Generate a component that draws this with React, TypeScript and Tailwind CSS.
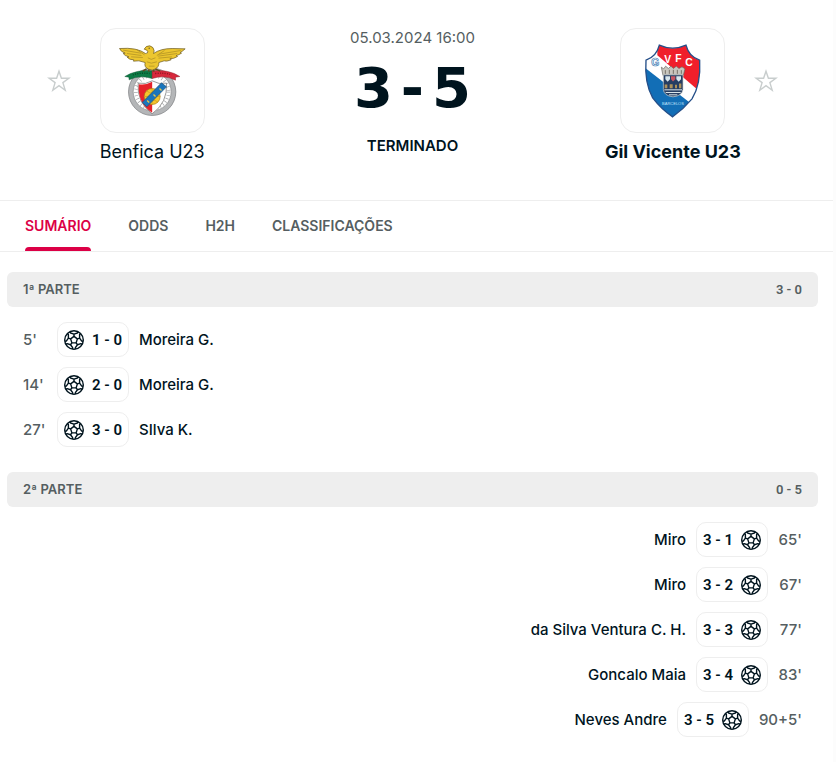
import { useState } from 'react'

type Goal = { minute: string; score: string; player: string }

const tabs = ['SUMÁRIO', 'ODDS', 'H2H', 'CLASSIFICAÇÕES']

const firstHalf: Goal[] = [
  { minute: "5'", score: '1 - 0', player: 'Moreira G.' },
  { minute: "14'", score: '2 - 0', player: 'Moreira G.' },
  { minute: "27'", score: '3 - 0', player: 'SIlva K.' },
]

const secondHalf: Goal[] = [
  { minute: "65'", score: '3 - 1', player: 'Miro' },
  { minute: "67'", score: '3 - 2', player: 'Miro' },
  { minute: "77'", score: '3 - 3', player: 'da Silva Ventura C. H.' },
  { minute: "83'", score: '3 - 4', player: 'Goncalo Maia' },
  { minute: "90+5'", score: '3 - 5', player: 'Neves Andre' },
]

const angles = [0, 72, 144, 216, 288]

function Ball() {
  return (
    <svg viewBox="0 0 20 20" className="size-5 shrink-0" fill="none" stroke="#00141e" strokeWidth="1.4" strokeLinejoin="round">
      <circle cx="10" cy="10" r="9.3" />
      <path d="M10 6.4 13.4 8.9 12.1 12.9H7.9L6.6 8.9Z" />
      {angles.map((a) => (
        <g key={a} transform={`rotate(${a} 10 10)`}>
          <path d="M10 6.4V4.1L6.6 3 6 1.7M10 4.1 13.4 3 14 1.7" />
        </g>
      ))}
    </svg>
  )
}

function FavoriteButton({ team }: { team: string }) {
  return (
    <button type="button" aria-label={team} className="cursor-pointer">
      <svg viewBox="0 0 24 24" className="size-6" fill="none" stroke="#c8cdcd" strokeWidth="1.4">
        <path d="M12 2.2 14.4 9.2H21.9L15.9 13.6 18.2 21.2 12 16.7 5.8 21.2 8.1 13.6 2.1 9.2H9.6Z" />
      </svg>
    </button>
  )
}

function BenficaLogo() {
  return (
    <svg viewBox="67.5 61.5 240 240" className="size-20">
      <circle cx="188" cy="214" r="71" fill="#b4b6b8" stroke="#77797b" strokeWidth="2" />
      <circle cx="188" cy="214" r="57" fill="#fff" stroke="#88898b" strokeWidth="2" />
      <circle cx="188" cy="214" r="49" fill="none" stroke="#a3a5a7" strokeWidth="11" strokeDasharray="2 8" />
      <path d="M146 188Q168 193 188 181 208 193 231 188 235 246 188 280 141 246 146 188Z" fill="#fff" stroke="#666" strokeWidth="2" />
      <path d="M148 191Q168 195 188 184V277Q143 247 148 191Z" fill="#e5232b" />
      <circle cx="188" cy="228" r="24" fill="#f5c62c" stroke="#a87a16" strokeWidth="2" />
      <path d="M188 204V252M164 228H212M171 211Q188 225 205 211M171 245Q188 231 205 245" fill="none" stroke="#c79a22" strokeWidth="2" />
      <path d="M158 246 216 187 231 199 172 259Z" fill="#1b75bb" stroke="#234e74" strokeWidth="2" />
      <path d="M173 240l6 6M192 222l6 6M210 204l6 6" stroke="#e9c748" strokeWidth="4" />
      <path d="M106 168Q142 146 190 151L188 174Q151 162 119 178L118 170Z" fill="#0b7b45" stroke="#185b3a" strokeWidth="1.5" />
      <path d="M188 151Q237 146 271 168L258 170 258 179Q225 162 188 174Z" fill="#d8283c" stroke="#8b2630" strokeWidth="1.5" />
      <path d="M130 163Q153 156 180 159" stroke="#064a29" strokeWidth="4" strokeDasharray="3 4" fill="none" />
      <path d="M197 159Q227 156 246 163" stroke="#8b1522" strokeWidth="4" strokeDasharray="3 4" fill="none" />
      <path d="M171 145 160 152M197 145 212 152M178 146V154M193 146V154" stroke="#5c4a20" strokeWidth="4" />
      <path
        d="M164 86Q169 75 181 76 193 79 194 91L192 99Q213 84 248 84L287 85Q277 94 272 96L276 98Q265 105 260 105L264 108Q251 116 242 114L245 118Q230 124 224 121L208 126Q209 140 196 146L188 149 177 146Q163 140 167 126L148 121 132 122 133 118Q119 118 113 110L118 109Q105 106 101 99L107 98Q94 94 90 84 143 80 168 99Q176 99 175 92 170 87 164 86Z"
        fill="#ecc62f"
        stroke="#60501d"
        strokeWidth="2"
        strokeLinejoin="round"
      />
      <path
        d="M101 89 154 98M112 99 156 105M125 109 160 111M274 90 209 101M263 99 205 107M247 109 207 113M141 87 165 103M225 90 202 105M175 112Q184 121 198 112M172 124Q184 132 202 124M178 137H195"
        fill="none"
        stroke="#a88a22"
        strokeWidth="2"
      />
      <circle cx="179" cy="83" r="1.7" fill="#333" />
    </svg>
  )
}

function GilVicenteLogo() {
  return (
    <svg viewBox="99 61.5 240 240" className="size-20">
      <defs>
        <clipPath id="gil-shield">
          <path d="M178 74Q218 92 258 74 267 109 299 119 303 191 276 235 250 266 218 289 183 265 158 232 133 188 138 119 169 109 178 74Z" />
        </clipPath>
      </defs>
      <g clipPath="url(#gil-shield)">
        <path d="M130 65H310V295H130Z" fill="#fff" />
        <path d="M172 65H310V222L172 104Z" fill="#f01f2b" />
        <path d="M130 138 292 264 230 300H130Z" fill="#126eb6" />
      </g>
      <path
        d="M178 74Q218 92 258 74 267 109 299 119 303 191 276 235 250 266 218 289 183 265 158 232 133 188 138 119 169 109 178 74Z"
        fill="none"
        stroke="#244e88"
        strokeWidth="4"
      />
      <g fontFamily="Liberation Sans" fontWeight="700" fontSize="31" fill="#fff" textAnchor="middle">
        <text x="166" y="135" stroke="#3978b2" strokeWidth="2">G</text>
        <text x="203" y="126">V</text>
        <text x="235" y="125">F</text>
        <text x="267" y="135">C</text>
        <text x="219" y="253" fill="#c3e4fa" fontSize="12" fontWeight="400">BARCELOS</text>
      </g>
      <path d="M184 140 191 145 197 137 205 144 213 137 220 144 229 137 237 144 246 139 255 145 250 165H189Z" fill="#c8c6be" stroke="#67645e" strokeWidth="2" />
      <path d="M196 149V160M208 148V160M220 148V160M232 148V160M244 149V160" stroke="#777168" strokeWidth="3" />
      <path d="M190 163H249V207Q247 226 219 229 192 226 190 207Z" fill="#263e63" stroke="#d1d3cd" strokeWidth="2" />
      <path d="M196 167H210V176L203 184 196 176ZM229 167H243V176L236 184 229 176Z" fill="#d9e7ed" />
      <path d="M213 167H226V176L219 183 213 176Z" fill="#c75661" />
      <path d="M194 203V192H202V203H209V191H218V203H225V193H231V203H237V189H244V203Z" fill="#ae925b" />
      <path d="M193 208H246M197 216H242M207 223H232" stroke="#d9e5ea" strokeWidth="3" />
    </svg>
  )
}

function TeamLogo({ children }: { children: React.ReactNode }) {
  return <div className="flex size-[105px] items-center justify-center rounded-2xl border border-[#eeeeee]">{children}</div>
}

function GoalRow({ goal, away }: { goal: Goal; away?: boolean }) {
  return (
    <li className={away ? 'flex h-[45px] flex-row-reverse items-center gap-2.5 px-4' : 'flex h-[45px] items-center gap-2.5 px-4'}>
      <span className={away ? 'min-w-6 text-right text-[#555e61]' : 'min-w-6 text-[#555e61]'}>{goal.minute}</span>
      <span
        className={
          away
            ? 'flex h-[35px] w-[72px] flex-row-reverse items-center justify-between rounded-[10px] border border-[#eeeeee] px-1.5'
            : 'flex h-[35px] w-[72px] items-center justify-between rounded-[10px] border border-[#eeeeee] px-1.5'
        }
      >
        <Ball />
        <span className="font-['Roboto',sans-serif] font-semibold">{goal.score}</span>
      </span>
      <span>{goal.player}</span>
    </li>
  )
}

function Half({ title, score, goals, away }: { title: string; score: string; goals: Goal[]; away?: boolean }) {
  return (
    <section className="mt-5">
      <div className="flex h-[35px] items-center justify-between rounded-md bg-[#eeeeee] px-4 text-[13px] font-semibold text-[#555e61]">
        <h2>{title}</h2>
        <span className="font-['Roboto',sans-serif]">{score}</span>
      </div>
      <ul className="pt-2.5 text-[15px] leading-6 font-medium">
        {goals.map((goal) => (
          <GoalRow key={goal.score} goal={goal} away={away} />
        ))}
      </ul>
    </section>
  )
}

export default function App() {
  const [active, setActive] = useState('SUMÁRIO')

  return (
    <div className="min-h-screen bg-[#fcfcfc] pr-[3px] font-['Inter',sans-serif] text-[#00141e]">
      <main className="min-h-screen bg-white pb-5">
        <header className="grid h-[200px] grid-cols-3 pt-7 pr-[30px] pl-[22px]">
          <div>
            <div className="grid grid-cols-[1fr_auto_1fr] items-center">
              <div className="flex justify-end pr-[29px]">
                <FavoriteButton team="Benfica U23" />
              </div>
              <TeamLogo>
                <BenficaLogo />
              </TeamLogo>
            </div>
            <p className="pt-[5px] text-center text-lg">Benfica U23</p>
          </div>

          <div className="text-center">
            <p className="text-[15px] leading-5 text-[#555e61]">05.03.2024 16:00</p>
            <p className="flex justify-center gap-2 pt-2.5 font-['DejaVu_Sans',sans-serif] text-[56px] leading-[60px] font-bold">
              <span>3</span>
              <span>-</span>
              <span>5</span>
            </p>
            <p className="pt-[18px] text-[15px] leading-5 font-semibold">TERMINADO</p>
          </div>

          <div>
            <div className="grid grid-cols-[1fr_auto_1fr] items-center">
              <span />
              <TeamLogo>
                <GilVicenteLogo />
              </TeamLogo>
              <div className="flex pl-[29px]">
                <FavoriteButton team="Gil Vicente U23" />
              </div>
            </div>
            <p className="pt-[5px] text-center text-lg font-bold whitespace-nowrap">Gil Vicente U23</p>
          </div>
        </header>

        <nav className="flex h-[52px] gap-[37px] border-y border-[#eeeeee] px-[25px] text-sm font-semibold text-[#555e61]">
          {tabs.map((tab) => (
            <a
              key={tab}
              href="#"
              onClick={() => setActive(tab)}
              className={active === tab ? 'relative flex items-center text-[#dc0046]' : 'relative flex items-center'}
            >
              {tab}
              {active === tab && <span className="absolute inset-x-0 bottom-0 h-1 rounded-t-sm bg-[#dc0046]" />}
            </a>
          ))}
        </nav>

        <div className="pr-[15px] pl-[7px]">
          <Half title="1ª PARTE" score="3 - 0" goals={firstHalf} />
          <Half title="2ª PARTE" score="0 - 5" goals={secondHalf} away />
        </div>
      </main>
    </div>
  )
}
